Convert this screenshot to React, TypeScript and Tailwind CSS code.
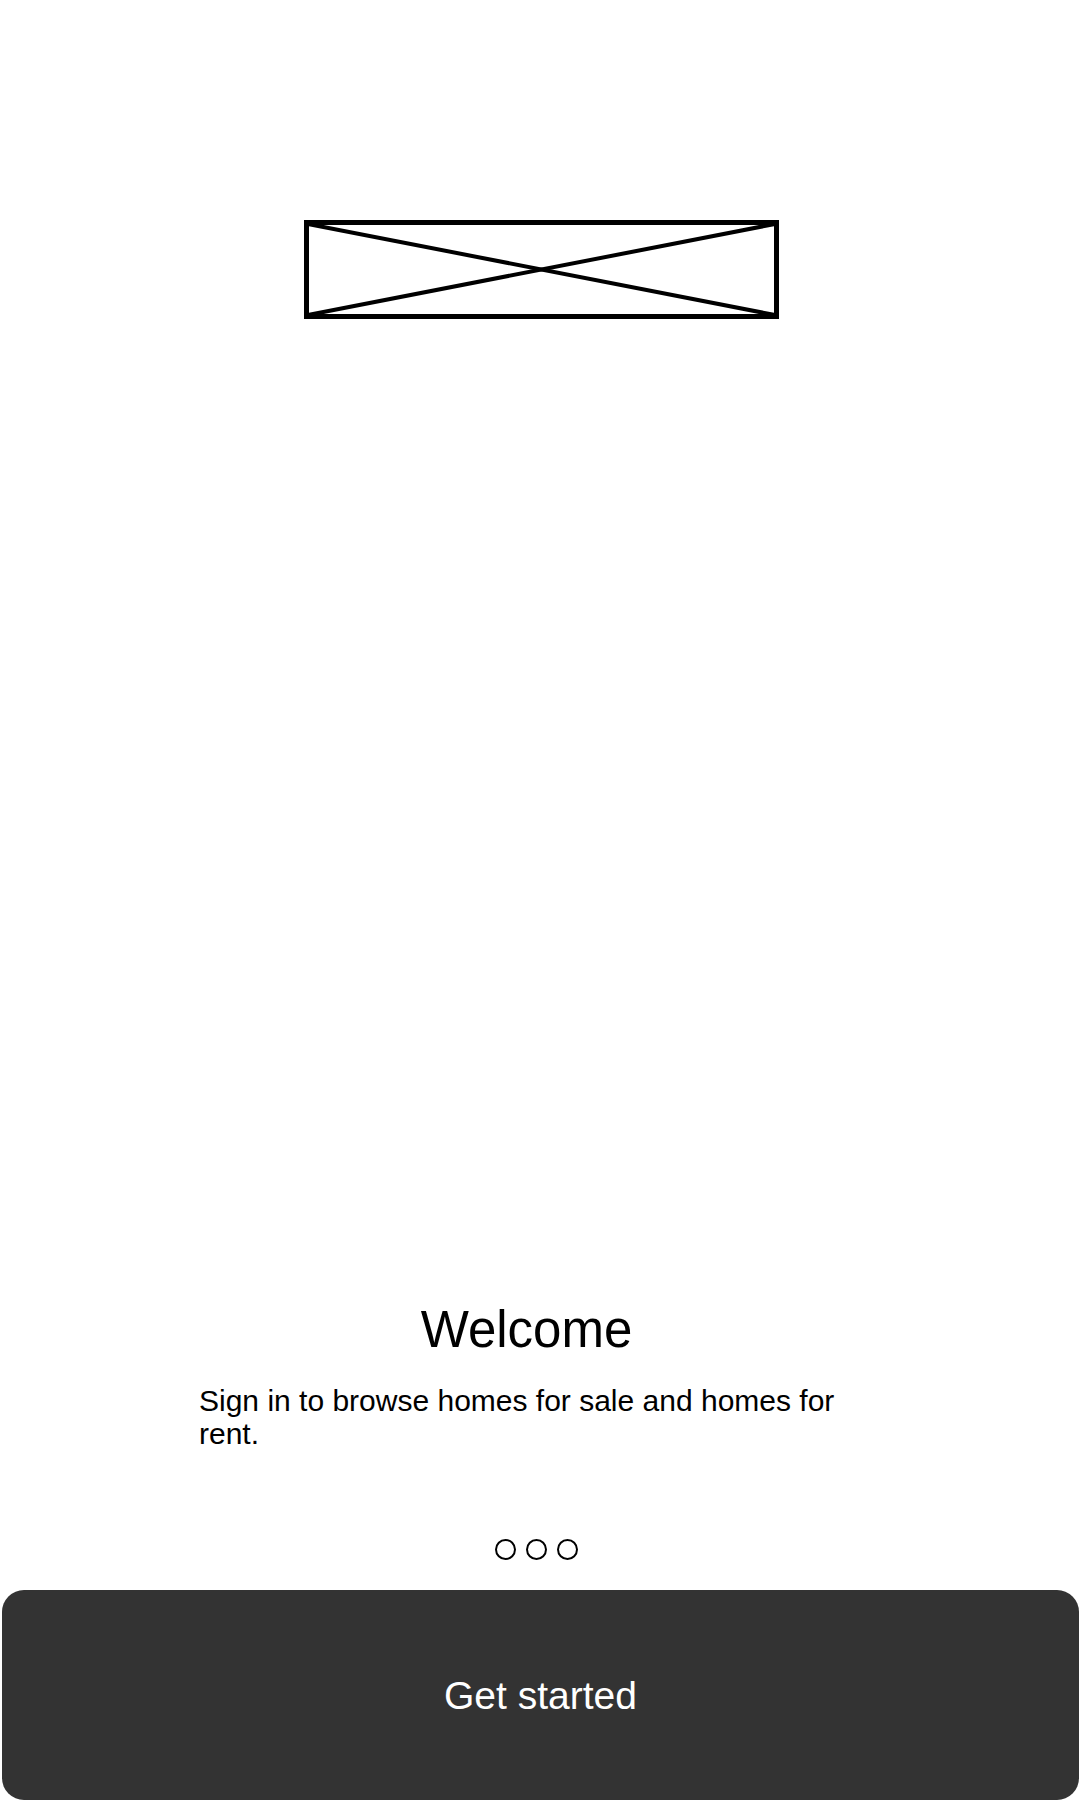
import React from "react";

export default function App() {
  return (
    <div
      className="w-[1080px] h-[1800px] bg-white flex flex-col text-black overflow-hidden"
      style={{ fontFamily: '"Liberation Sans", Arial, sans-serif' }}
    >
      <div className="mt-[220px] ml-[304px] w-[475px] h-[99px]">
        <svg width="475" height="99" viewBox="0 0 475 99" className="block">
          <rect x="2.5" y="2.5" width="470" height="94" fill="none" stroke="#000" strokeWidth="5" />
          <line x1="4" y1="4" x2="471" y2="95" stroke="#000" strokeWidth="4" />
          <line x1="4" y1="95" x2="471" y2="4" stroke="#000" strokeWidth="4" />
        </svg>
      </div>

      <div className="mt-[985px] ml-[199px] w-[655px] flex flex-col">
        <h1 className="text-[51px] leading-none text-center font-normal">Welcome</h1>
        <p className="mt-[29px] text-[30px] leading-[33px]">
          Sign in to browse homes for sale and homes for rent.
        </p>
      </div>

      <div className="mt-[89px] ml-[495px] flex gap-[10px]">
        <div className="w-[21px] h-[21px] rounded-full border-2 border-black" />
        <div className="w-[21px] h-[21px] rounded-full border-2 border-black" />
        <div className="w-[21px] h-[21px] rounded-full border-2 border-black" />
      </div>

      <button className="mt-[30px] ml-[2px] w-[1077px] h-[210px] rounded-[22px] bg-[#333333] text-white text-[39px] leading-none flex items-center justify-center">
        Get started
      </button>
    </div>
  );
}
